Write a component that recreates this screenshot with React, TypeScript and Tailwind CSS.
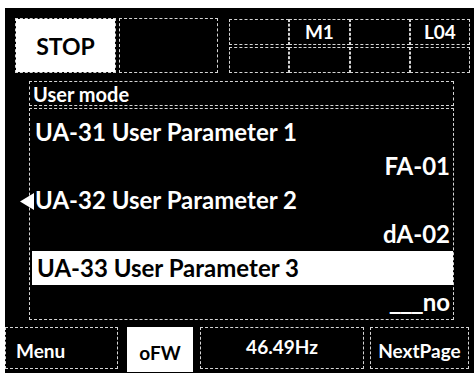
import React from 'react';

const dash = 'border border-dashed border-[#d6d6d6]';

type Row = { text: string; align: 'left' | 'right'; selected?: boolean };

const rows: Row[] = [
  { text: 'UA-31 User Parameter 1', align: 'left' },
  { text: 'FA-01', align: 'right' },
  { text: 'UA-32 User Parameter 2', align: 'left' },
  { text: 'dA-02', align: 'right' },
  { text: 'UA-33 User Parameter 3', align: 'left', selected: true },
  { text: '___no', align: 'right' },
];

export default function App() {
  return (
    <div
      className="w-[474px] h-[373px] bg-white pl-[5px] pt-[8px] overflow-hidden"
      style={{ fontFamily: 'Lato, "Open Sans", sans-serif' }}
    >
      <div className="w-[469px] h-[365px] bg-black text-white font-bold pt-[10px]">
        {/* status row */}
        <div className="flex h-[55px]">
          <div className={`${dash} bg-white bg-clip-padding text-black ml-[10px] w-[101px] flex items-center justify-center text-[23px] pt-[2px]`}>
            STOP
          </div>
          <div className={`${dash} ml-[3px] w-[99px]`} />
          <div className="ml-[11px] w-[241px] grid grid-cols-4 grid-rows-[26px_26px] gap-y-[2px] pt-[1px]">
            <div className={dash} />
            <div className={`${dash} flex items-end justify-center text-[19px] leading-none pb-[3px]`}>M1</div>
            <div className={dash} />
            <div className={`${dash} flex items-end justify-center text-[19px] leading-none pb-[3px]`}>L04</div>
            <div className={dash} />
            <div className={dash} />
            <div className={dash} />
            <div className={dash} />
          </div>
        </div>

        {/* header */}
        <div className={`${dash} ml-[24px] mt-[8px] w-[425px] h-[25px] flex items-center pl-[3px] text-[20px] leading-none`}>
          User mode
        </div>

        {/* parameter list */}
        <div className={`${dash} relative ml-[24px] mt-[2px] w-[425px] pt-[6px]`}>
          <svg className="absolute left-[-10px] top-[84px]" width="14" height="17" viewBox="0 0 14 17">
            <polygon points="0,8.5 14,0 14,17" fill="#fff" />
          </svg>
          {rows.map((r, i) => (
            <div
              key={i}
              className={`h-[34px] flex items-center text-[24px] leading-none ${
                r.align === 'right' ? 'justify-end pr-[3px]' : 'pl-[5px]'
              } ${r.selected ? 'bg-white text-black ml-[2px] pl-[3px]' : ''}`}
            >
              {r.text.startsWith('___') ? (
                <>
                  <span className="font-['DejaVu_Sans',sans-serif] text-[22px]">___</span>
                  {r.text.slice(3)}
                </>
              ) : (
                r.text
              )}
            </div>
          ))}
        </div>

        {/* soft keys */}
        <div className="flex mt-[7px] h-[42px] text-[19px] leading-none">
          <div className={`${dash} w-[113px] flex items-end pl-[10px] pb-[8px]`}>Menu</div>
          <div className="ml-[9px] w-[66px] h-[45px] bg-white text-black flex items-end justify-center pb-[10px]">oFW</div>
          <div className={`${dash} ml-[7px] w-[164px] flex items-start justify-center pt-[9px]`}>46.49Hz</div>
          <div className={`${dash} ml-[6px] w-[99px] flex items-end justify-center pb-[8px]`}>NextPage</div>
        </div>
      </div>
    </div>
  );
}
